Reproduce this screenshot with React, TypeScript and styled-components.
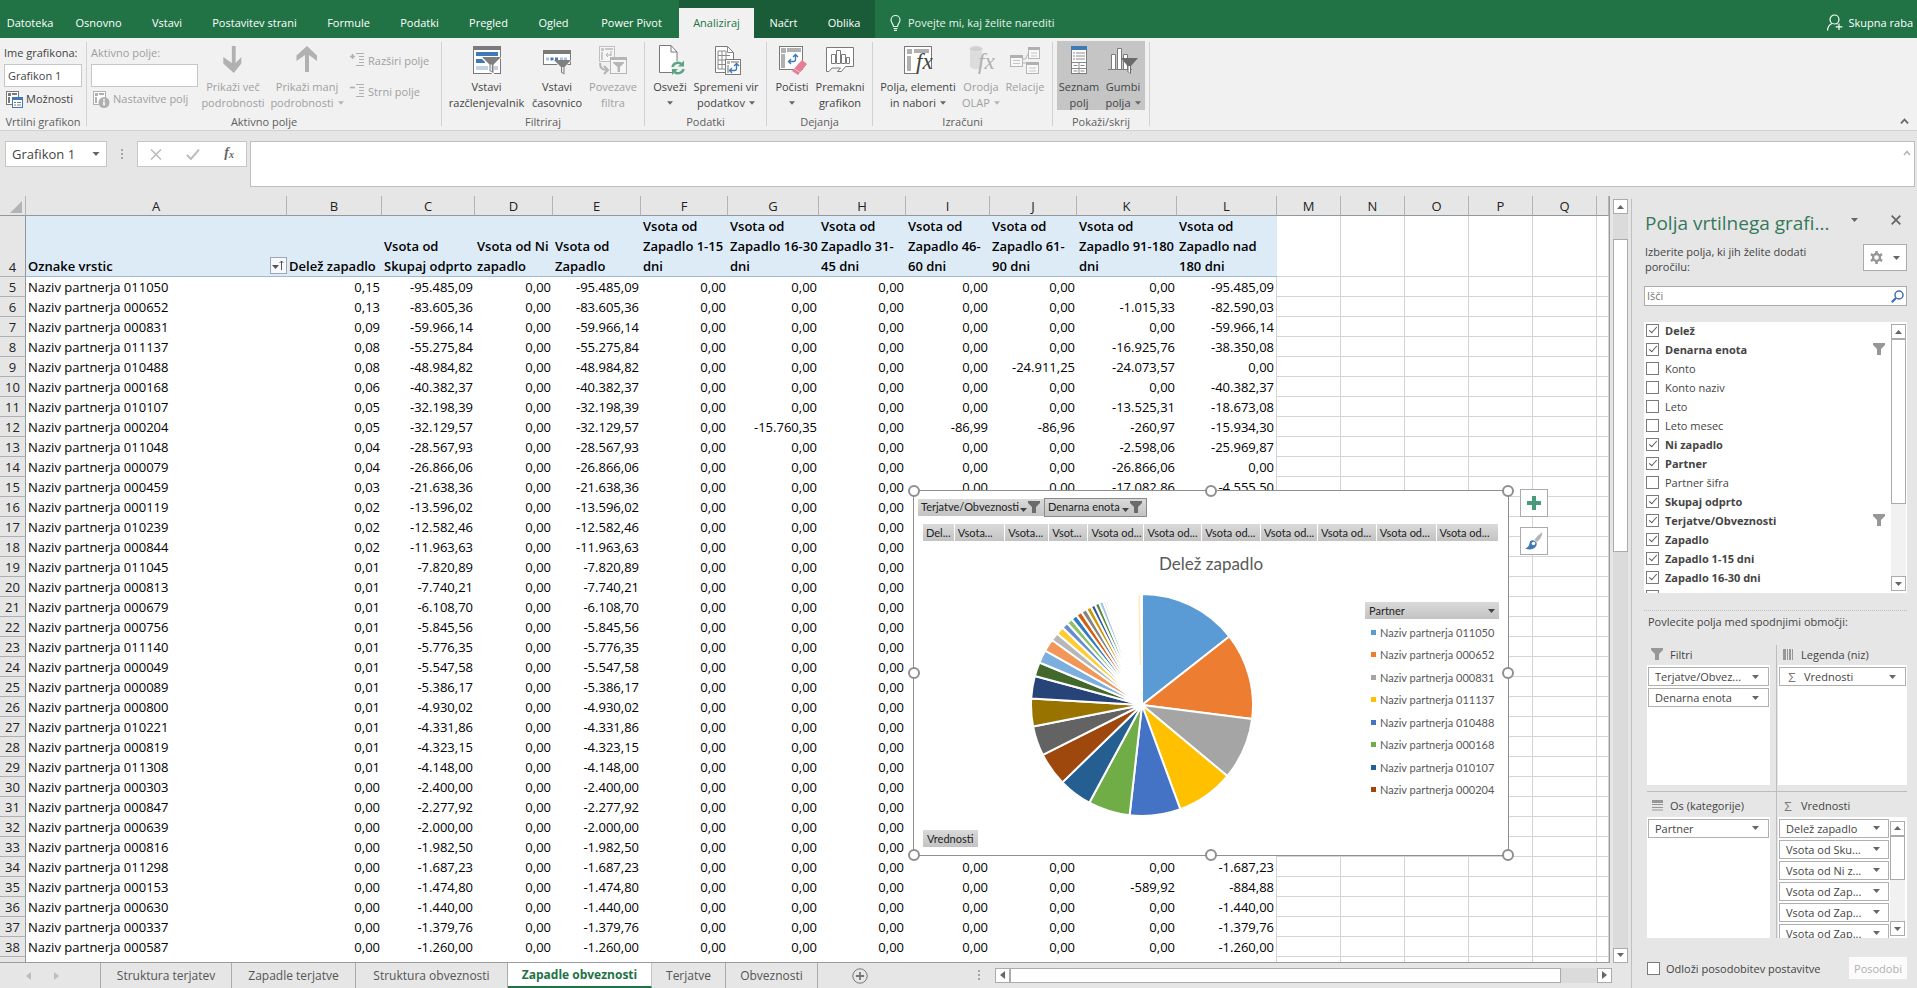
import React from "react";
import styled, { createGlobalStyle, css } from "styled-components";

const UI = `"Open Sans", "Noto Sans", sans-serif`;
const CHART = `Lato, "Open Sans", sans-serif`;

const GlobalStyle = createGlobalStyle`
  *, *::before, *::after { box-sizing: border-box; }
  body { margin: 0; font-family: ${UI}; font-size: 11px; color: #444; background: #e6e6e6; }
  button, input { font: inherit; color: inherit; margin: 0; padding: 0; border: 0; background: none; border-radius: 0; outline: 0; }
  svg { display: block; flex: none; }
`;

/* ---------- data ---------- */

const COLUMNS: [string, number, string][] = [
  ["A", 261, "Oznake vrstic"],
  ["B", 95, "Delež zapadlo"],
  ["C", 93, "Vsota od\nSkupaj odprto"],
  ["D", 78, "Vsota od Ni\nzapadlo"],
  ["E", 88, "Vsota od\nZapadlo"],
  ["F", 87, "Vsota od\nZapadlo 1-15\ndni"],
  ["G", 91, "Vsota od\nZapadlo 16-30\ndni"],
  ["H", 87, "Vsota od\nZapadlo 31-\n45 dni"],
  ["I", 84, "Vsota od\nZapadlo 46-\n60 dni"],
  ["J", 87, "Vsota od\nZapadlo 61-\n90 dni"],
  ["K", 100, "Vsota od\nZapadlo 91-180\ndni"],
  ["L", 100, "Vsota od\nZapadlo nad\n180 dni"],
];
const EMPTY_COLUMNS = ["M", "N", "O", "P", "Q"];

const Z = "0,00";
type Row = { id: string; share: string; total: string; g?: string; late?: string[] };
const ROWS: Row[] = [
  { id: "011050", share: "0,15", total: "-95.485,09", late: [Z, Z, Z, "-95.485,09"] },
  { id: "000652", share: "0,13", total: "-83.605,36", late: [Z, Z, "-1.015,33", "-82.590,03"] },
  { id: "000831", share: "0,09", total: "-59.966,14", late: [Z, Z, Z, "-59.966,14"] },
  { id: "011137", share: "0,08", total: "-55.275,84", late: [Z, Z, "-16.925,76", "-38.350,08"] },
  { id: "010488", share: "0,08", total: "-48.984,82", late: [Z, "-24.911,25", "-24.073,57", Z] },
  { id: "000168", share: "0,06", total: "-40.382,37", late: [Z, Z, Z, "-40.382,37"] },
  { id: "010107", share: "0,05", total: "-32.198,39", late: [Z, Z, "-13.525,31", "-18.673,08"] },
  { id: "000204", share: "0,05", total: "-32.129,57", g: "-15.760,35", late: ["-86,99", "-86,96", "-260,97", "-15.934,30"] },
  { id: "011048", share: "0,04", total: "-28.567,93", late: [Z, Z, "-2.598,06", "-25.969,87"] },
  { id: "000079", share: "0,04", total: "-26.866,06", late: [Z, Z, "-26.866,06", Z] },
  { id: "000459", share: "0,03", total: "-21.638,36", late: [Z, Z, "-17.082,86", "-4.555,50"] },
  { id: "000119", share: "0,02", total: "-13.596,02" },
  { id: "010239", share: "0,02", total: "-12.582,46" },
  { id: "000844", share: "0,02", total: "-11.963,63" },
  { id: "011045", share: "0,01", total: "-7.820,89" },
  { id: "000813", share: "0,01", total: "-7.740,21" },
  { id: "000679", share: "0,01", total: "-6.108,70" },
  { id: "000756", share: "0,01", total: "-5.845,56" },
  { id: "011140", share: "0,01", total: "-5.776,35" },
  { id: "000049", share: "0,01", total: "-5.547,58" },
  { id: "000089", share: "0,01", total: "-5.386,17" },
  { id: "000800", share: "0,01", total: "-4.930,02" },
  { id: "010221", share: "0,01", total: "-4.331,86" },
  { id: "000819", share: "0,01", total: "-4.323,15" },
  { id: "011308", share: "0,01", total: "-4.148,00" },
  { id: "000303", share: Z, total: "-2.400,00" },
  { id: "000847", share: Z, total: "-2.277,92" },
  { id: "000639", share: Z, total: "-2.000,00" },
  { id: "000816", share: Z, total: "-1.982,50" },
  { id: "011298", share: Z, total: "-1.687,23", late: [Z, Z, Z, "-1.687,23"] },
  { id: "000153", share: Z, total: "-1.474,80", late: [Z, Z, "-589,92", "-884,88"] },
  { id: "000630", share: Z, total: "-1.440,00", late: [Z, Z, Z, "-1.440,00"] },
  { id: "000337", share: Z, total: "-1.379,76", late: [Z, Z, Z, "-1.379,76"] },
  { id: "000587", share: Z, total: "-1.260,00", late: [Z, Z, Z, "-1.260,00"] },
];

const PALETTE = [
  "#5b9bd5", "#ed7d31", "#a5a5a5", "#ffc000", "#4472c4", "#70ad47",
  "#255e91", "#9e480e", "#636363", "#997300", "#264478", "#43682b",
  "#7cafdd", "#f1975a", "#b7b7b7", "#ffcd33", "#698ed0", "#8cc168",
  "#327dc2", "#d26012", "#848484", "#cc9a00", "#335aa1", "#5a8a39",
  "#9dc3e6", "#f4b183", "#c9c9c9", "#ffd966", "#8faadc", "#a9d18e",
];
const GRAND_TOTAL = 663000;

/* ---------- shared bits ---------- */

const Caret = ({ c = "#666", up = false, s = 7 }: { c?: string; up?: boolean; s?: number }) => (
  <svg width={s} height="4" viewBox="0 0 7 4"><path d={up ? "M0 4L3.5 0L7 4z" : "M0 0h7L3.5 4z"} fill={c} /></svg>
);
const Side = ({ left = false, c = "#666" }: { left?: boolean; c?: string }) => (
  <svg width="5" height="8" viewBox="0 0 5 8"><path d={left ? "M5 0v8L0 4z" : "M0 0v8l5-4z"} fill={c} /></svg>
);
const FunnelIcon = ({ c = "#979797" }: { c?: string }) => (
  <svg width="12" height="12" viewBox="0 0 12 12"><path d="M0 0h12v2L8 6v6H4V6L0 2z" fill={c} /></svg>
);

/* ---------- title tabs ---------- */

const TabBar = styled.header`display: flex; height: 38px; background: #217346; color: #fff;`;
const TabList = styled.nav`display: flex;`;
const Tab = styled.button<{ $w: number; $kind?: "context" | "active" }>`
  width: ${p => p.$w}px;
  padding-top: 7px;
  white-space: nowrap;
  line-height: 16px;
  ${p => p.$kind === "context" && css`background: #1b5c38;`}
  ${p => p.$kind === "active" && css`background: #f1f1f1; color: #217346; border-top: 8px solid #1b5c38; padding-top: 0;`}
`;
const TellMe = styled.button`display: flex; align-items: center; gap: 7px; margin-left: 15px; padding-top: 7px; color: #e3f3e9;`;
const Share = styled.button`display: flex; align-items: center; gap: 6px; margin-left: auto; padding: 7px 4px 0 0;`;

const TABS: [string, number, ("context" | "active")?][] = [
  ["Datoteka", 60], ["Osnovno", 77], ["Vstavi", 60], ["Postavitev strani", 115], ["Formule", 73], ["Podatki", 69],
  ["Pregled", 69], ["Ogled", 61], ["Power Pivot", 95], ["Analiziraj", 75, "active"], ["Načrt", 59, "context"], ["Oblika", 62, "context"],
];

/* ---------- ribbon ---------- */

const Ribbon = styled.section`display: flex; height: 93px; background: #f1f1f1; border-bottom: 1px solid #d2d2d2;`;
const Group = styled.div<{ $w: number }>`width: ${p => p.$w}px; display: flex; flex-direction: column;`;
const GroupBody = styled.div<{ $pad: number }>`display: flex; padding-left: ${p => p.$pad}px; height: 72px;`;
const GroupLabel = styled.div`margin-top: auto; line-height: 16px; text-align: center; color: #5e5e5e; white-space: nowrap;`;
const Divider = styled.div`width: 1px; margin: 4px 0; background: #d2d2d2;`;
const BigButton = styled.button<{ $w: number; $off?: boolean; $on?: boolean }>`
  width: ${p => p.$w}px; margin-top: 3px; padding-top: 4px; height: 69px;
  display: flex; flex-direction: column; align-items: center; gap: 4px;
  line-height: 16px; color: ${p => (p.$off ? "#a0a0a0" : "#444")};
  background: ${p => (p.$on ? "#c5c5c5" : "transparent")};
`;
const BigText = styled.span`display: flex; flex-direction: column; align-items: center; white-space: nowrap;`;
const BigLine = styled.span`display: flex; align-items: center; gap: 4px; min-height: 16px;`;
const Stack = styled.div<{ $w: number }>`display: flex; flex-direction: column; width: ${p => p.$w}px; padding-top: 7px; line-height: 16px; white-space: nowrap;`;
const StackLabel = styled.label<{ $off?: boolean }>`color: ${p => (p.$off ? "#a0a0a0" : "#444")};`;
const StackInput = styled.input<{ $w: number }>`width: ${p => p.$w}px; height: 23px; margin-top: 3px; padding: 0 3px; background: #fff; border: 1px solid #c6c6c6;`;
const SmallButton = styled.button<{ $off?: boolean }>`
  display: flex; align-items: center; gap: 3px; height: 18px; margin: 3px 0 0 2px; white-space: nowrap; color: ${p => (p.$off ? "#a0a0a0" : "#444")};
`;
const Expand = styled.div`display: flex; flex-direction: column; gap: 10px; padding: 10px 0 0 2px;`;
const Collapse = styled.button`margin: auto 8px 6px auto;`;

type BtnProps = { w: number; lines: string[]; icon: React.ReactNode; off?: boolean; on?: boolean; caret?: boolean };
const Big = ({ w, lines, icon, off, on, caret }: BtnProps) => (
  <BigButton type="button" $w={w} $off={off} $on={on} disabled={off}>
    {icon}
    <BigText>
      {lines.map((l, i) => (
        <BigLine key={i}>{l}{caret && i === lines.length - 1 && <Caret c={off ? "#b5b5b5" : "#666"} s={6} />}</BigLine>
      ))}
    </BigText>
  </BigButton>
);
const Ico = ({ children }: { children: React.ReactNode }) => <svg width="30" height="30" viewBox="0 0 30 30" fill="none">{children}</svg>;

const SwapArrow = ({ x, y, c = "#3b78b5" }: { x: number; y: number; c?: string }) => (
  <g transform={`translate(${x} ${y})`} stroke={c} strokeWidth="1.3"><path d="M1 7.500h4.500q2 0 2-2V1M5 3l2.500-2.500L10 3M3 5L.5 7.500L3 10" /></g>
);
const DownArrow = <Ico><path d="M13 1h4v17l6-6v6.500L15 28l-11-9.500V12l9 6z" fill="#b1b1b1" transform="translate(1.500 0) scale(.95 1)" /></Ico>;
const UpArrow = <Ico><path d="M13 27h4V10l8 6V10.500L15 1L4.500 10.500V16l8.500-6z" fill="#b1b1b1" /></Ico>;
const Slicer = (
  <Ico>
    <rect x="1.500" y="1.500" width="27" height="27" fill="#fff" stroke="#7a7a7a" /><path d="M1 1h28v4H1z" fill="#7a7a7a" />
    <path d="M4 7h22v4H4zM4 14h9v4H4z" fill="#3f7ab6" /><path d="M4 21h22v4H4z" fill="#c0d1e6" />
    <path d="M8 12h22l-8 8v10l-6-4v-6z" fill="#fff" /><path d="M10 12h19l-7.500 7.500V28L17.500 26v-6.500z" fill="#7f7f7f" /><path d="M18.500 19.500v6l1.500 1v-7z" fill="#e8e8e8" />
  </Ico>
);
const Timeline = (
  <Ico>
    <rect x="1.500" y="5.500" width="27" height="14" fill="#fff" stroke="#7a7a7a" /><path d="M1 5h28v4H1z" fill="#7a7a7a" />
    <path d="M4 12.500h3v3H4zM18 12.500h3v3h-3zM22 12.500h3v3h-3z" fill="#a8c1dc" /><path d="M8.500 12.500h3v3h-3zM13 12.500h3v3h-3z" fill="#3f7ab6" />
    <path d="M10 15h20l-7 7v8h-5v-8z" fill="#f1f1f1" /><path d="M12 15h17l-6.500 7v7.500l-3.500-2V22z" fill="#7f7f7f" /><path d="M20 22v5l1.500 1v-6z" fill="#e8e8e8" />
  </Ico>
);
const Connections = (
  <Ico>
    <rect x="1.500" y="1.500" width="15" height="15" fill="#f5f5f5" stroke="#c0c0c0" /><path d="M3 3h3v3H3zM7 3h8v2H7zM3 7h2v8H3z" fill="#c8c8c8" />
    <path d="M8 10h5M10 8l-2 2l2 2M13 6v5" stroke="#b0b0b0" /><rect x="12.500" y="12.500" width="16" height="16" fill="#f5f5f5" stroke="#b5b5b5" />
    <path d="M12 12h17v3H12zM15 17h11v1l-4 4v5h-2.500v-5L15 18z" fill="#b5b5b5" /><path d="M2 18q0 7 7 7M6 21l4 4l-4 4" stroke="#b5b5b5" strokeWidth="2" />
  </Ico>
);
const Refresh = (
  <Ico>
    <path d="M4.500 .5h11.500l6 6.500v20.500H4.500z" fill="#fff" stroke="#7a7a7a" /><path d="M16 .5v6.500h6" stroke="#7a7a7a" />
    <circle cx="23" cy="23" r="7" fill="#f1f1f1" />
    <path d="M17.500 22a5.500 5 0 0 1 9-3M28.500 24a5.500 5 0 0 1-9 3" stroke="#5aa483" strokeWidth="2.400" /><path d="M29 15.500v6h-6zM17 30v-6h6z" fill="#5aa483" />
  </Ico>
);
const Source = (
  <Ico>
    <path d="M4.500 1.500h12l6 6v20h-18z" fill="#fff" stroke="#7a7a7a" /><path d="M16.500 1.500v6h6M7 6h8M7 10.500h12M7 15h8M7 19.500h7M7 24h7M7 6v18M11 6v18M15 6v9" stroke="#8a8a8a" />
    <rect x="14.500" y="14.500" width="15" height="15" fill="#fff" stroke="#7a7a7a" /><path d="M16 16h3v3h-3zM20 16h8v2h-8zM16 20h2v8h-2z" fill="#b5b5b5" /><SwapArrow x={18} y={18} />
  </Ico>
);
const Clear = (
  <Ico>
    <rect x="2.500" y="1.500" width="23" height="23" fill="#fff" stroke="#7a7a7a" /><path d="M4 3h5v5H4zM10 3h14v4H10zM4 9h4v14H4z" fill="#b0b0b0" /><SwapArrow x={11} y={9} />
    <path d="M25 15l5 4l-9 11l-6-4z" fill="#e57d94" /><path d="M17 23.500l6 4" stroke="#f4c3cd" />
  </Ico>
);
const MoveChart = (
  <Ico>
    <path d="M1.500 2.500h27v19h-8l-4 5h-4l3-3.500H7l-3 3.500h-2.500z" fill="#fff" stroke="#7a7a7a" /><path d="M6.500 9.500h4v9h-4zM11.500 5.500h4v13h-4zM16.500 9.500h4v9h-4zM21.500 12.500h3v6h-3z" stroke="#7a7a7a" />
  </Ico>
);
const Fields = (
  <Ico>
    <rect x="1.500" y="1.500" width="27" height="27" fill="#fff" stroke="#7a7a7a" />
    <path d="M4 4h5v5H4zM11 4h15v4H11zM4 11h4v15H4z" fill="#b0b0b0" /><path d="M16 24h14v6H14z" fill="#f1f1f1" />
    <text x="13" y="24" fontFamily="Liberation Serif, serif" fontStyle="italic" fontSize="23" fill="#444">fx</text>
  </Ico>
);
const Olap = (
  <Ico>
    <path d="M4 4v18q5 4 12 1V4z" fill="#dcdcdc" /><ellipse cx="10" cy="4" rx="6.500" ry="3" fill="#d0d0d0" stroke="#e6e6e6" />
    <text x="12" y="24" fontFamily="Liberation Serif, serif" fontStyle="italic" fontSize="23" fill="#b0b0b0">fx</text>
  </Ico>
);
const Relations = (
  <Ico>
    <g stroke="#b5b5b5" fill="#f8f8f8"><rect x=".5" y="10.500" width="12" height="11" /><rect x="18.500" y="2.500" width="11" height="11" /><rect x="16.500" y="17.500" width="12" height="11" /><path d="M12.500 14h3l3-6M12.500 18h4" fill="none" /></g>
    <path d="M0 10h13v3H0zM18 2h12v3H18zM16 17h13v3H16z" fill="#b0b0b0" /><path d="M3 15.500h7M3 18.500h7M21 8h6M21 11h6M19 23h7M19 26h7" stroke="#c5c5c5" />
  </Ico>
);
const FieldListIcon = (
  <Ico>
    <rect x="7.500" y="1.500" width="15" height="27" fill="#fff" stroke="#7a7a7a" /><path d="M7 1h16v4H7z" fill="#3f7ab6" />
    <path d="M9 8h2M12 8h9M9 11h2M12 11h9M9 14h2M12 14h9" stroke="#8a8a8a" /><path d="M8 17.500h14M15 17v11M9.500 20.500h4M16.500 20.500h4M8 23.500h14M9.500 26h4M16.500 26h4" stroke="#8a8a8a" />
  </Ico>
);
const FieldButtonsIcon = (
  <Ico>
    <path d="M0 24.500h24" stroke="#7a7a7a" /><path d="M3.500 9.500h4v15h-4zM9.500 3.500h4v21h-4zM15.500 9.500h4v15h-4z" fill="#fff" stroke="#7a7a7a" />
    <path d="M13 13h17l-7 8v8l-3.500-2v-6z" fill="#6b6b6b" /><path d="M20.500 21v6l1.500 1v-7z" fill="#fff" />
  </Ico>
);
const OptionsIcon = ({ c, accent, info }: { c: string; accent: string; info?: boolean }) => (
  <svg width="17" height="17" viewBox="0 0 17 17" fill="none">
    <rect x=".5" y=".5" width="12" height="13" fill="#fff" stroke={c} /><path d="M2 2h3v3H2zM6 2h5v2H6zM2 6h2v6H2z" fill={c} />
    {info ? <><circle cx="11" cy="11.500" r="5.500" fill={c} /><path d="M11 8v1.500M11 10.500v4" stroke="#fff" strokeWidth="1.600" /></>
      : <><rect x="6.500" y="6.500" width="10" height="10" fill="#fff" stroke={accent} /><path d="M6 6h11v3H6z" fill={accent} /><path d="M8 11.500h2M11 11.500h4M8 14h2M11 14h4" stroke={c} /></>}
  </svg>
);
const OutlineIcon = ({ plus }: { plus?: boolean }) => (
  <svg width="15" height="14" viewBox="0 0 15 14" fill="none" stroke="#b0b0b0"><path d="M0 3.500h5" strokeWidth="1.600" />{plus && <path d="M2.500 1v5" strokeWidth="1.600" />}<path d="M6 .5h8M9 3.500h5M9 6.500h5M9 9.500h5M6 12.500h8" /></svg>
);

/* ---------- formula bar ---------- */

const FormulaBar = styled.section`display: flex; align-items: flex-start; height: 65px; padding: 10px 2px 0 5px; background: #e6e6e6;`;
const NameBox = styled.div`display: flex; align-items: center; width: 102px; height: 26px; padding-right: 6px; background: #fff; border: 1px solid #c6c6c6; font-size: 13px;`;
const NameInput = styled.input`flex: 1; min-width: 0; padding-left: 6px;`;
const Dots = styled.div`display: flex; flex-direction: column; gap: 2px; padding: 8px 14px 0; i { width: 2px; height: 2px; background: #a5a5a5; }`;
const FxBox = styled.div`display: flex; align-items: center; justify-content: space-between; width: 110px; height: 26px; padding: 0 12px; background: #fff; border: 1px solid #c6c6c6;`;
const FxButton = styled.button`font: italic bold 14px "Liberation Serif", serif; color: #666; line-height: 16px; sub { font-size: 10px; vertical-align: -1px; }`;
const FormulaField = styled.div`display: flex; align-items: flex-start; flex: 1; height: 46px; margin-left: 3px; padding-right: 3px; background: #fff; border: 1px solid #bebebe;`;
const FormulaText = styled.textarea`flex: 1; height: 42px; border: 0; outline: 0; resize: none; background: none; font: inherit;`;
const FormulaUp = styled.button`margin-top: 8px;`;

/* ---------- sheet ---------- */

const Shell = styled.div`display: flex; flex-direction: column; height: 100vh; min-height: 700px; overflow: hidden;`;
const Work = styled.main`display: flex; flex: 1; min-height: 0;`;
const Left = styled.div`display: flex; flex-direction: column; flex: 1; min-width: 0;`;
const SheetRow = styled.div`display: flex; flex: 1; min-height: 0;`;
const GridArea = styled.div`position: relative; flex: 1; min-width: 0; overflow: hidden; border-right: 1px solid #9b9b9b; border-bottom: 1px solid #9b9b9b; background: #e6e6e6;`;
const Grid = styled.table`table-layout: fixed; width: 100%; border-collapse: separate; border-spacing: 0; font-size: 13px; line-height: 18px; color: #000; background: #fff;`;
const ColHead = styled.th`height: 20px; padding: 0; font-weight: 400; color: #222; background: #e6e6e6; border-right: 1px solid #b4b4b4; border-bottom: 1px solid #8f979f;`;
const Corner = styled(ColHead)`padding: 0 3px 2px 0; svg { margin: 4px 0 0 10px; }`;
const RowHead = styled.th<{ $bottom?: boolean }>`
  height: 20px; padding: 0; font-weight: 400; color: #222; background: #e6e6e6;
  border-right: 1px solid #8f979f; border-bottom: 1px solid #b0b0b0; vertical-align: ${p => (p.$bottom ? "bottom" : "middle")};
`;
const HeadCell = styled.th`
  height: 60px; padding: 0 0 0 2px; text-align: left; vertical-align: bottom; white-space: pre; line-height: 20px; font-weight: 600;
  background: #ddebf7; border-bottom: 1px solid #9fb9d1;
`;
const HeadInner = styled.div`display: flex; align-items: flex-end; justify-content: space-between; height: 20px;`;
const SortButton = styled.button`display: flex; align-items: center; justify-content: center; width: 17px; height: 17px; margin-bottom: 2px; background: #f7f9fc; border: 1px solid #9aa7b8;`;
const NameCell = styled.td`padding: 0 0 0 2px; white-space: nowrap;`;
const NumCell = styled.td<{ $edge?: boolean }>`padding: 0 2px 0 0; text-align: right; white-space: nowrap; ${p => p.$edge && css`border-right: 1px solid #d4d4d4;`}`;
const EmptyCell = styled.td`padding: 0; border-right: 1px solid #d4d4d4; border-bottom: 1px solid #d4d4d4;`;

const VBar = styled.div`display: flex; flex-direction: column; width: 15px; margin: 3px 3px 0; background: #dbdbdb;`;
const ScrollButton = styled.button`display: flex; align-items: center; justify-content: center; flex: none; width: 15px; height: 15px; background: #fff; border: 1px solid #ababab;`;
const VGap = styled.div<{ $n: number }>`flex: ${p => p.$n} 1 0;`;
const VThumb = styled.div<{ $n: number }>`flex: ${p => p.$n} 1 0; background: #fff; border: 1px solid #ababab;`;

const SheetTabs = styled.footer`display: flex; align-items: stretch; height: 25px; font-size: 12px; color: #555; background: #e6e6e6;`;
const SheetNav = styled.div`display: flex; align-items: center; gap: 23px; width: 101px; padding-left: 26px; border-right: 1px solid #ababab;`;
const SheetTab = styled.button<{ $w: number; $active?: boolean }>`
  width: ${p => p.$w}px; white-space: nowrap; border-right: 1px solid #ababab; padding-bottom: 1px;
  ${p => p.$active && css`background: #fff; color: #217346; font-weight: 700; border-right-color: #c6c6c6; border-bottom: 2px solid #217346; margin-top: -1px; padding-bottom: 0;`}
`;
const AddSheet = styled.button`margin-left: 34px;`;
const HBar = styled.div`display: flex; align-items: center; flex: none; margin: 0 19px 0 auto; width: 634px; padding-bottom: 1px;`;
const HDots = styled(Dots)`padding: 0 15px 0 0;`;
const HTrack = styled.div`display: flex; flex: 1; background: #dbdbdb;`;
const HThumb = styled.div`flex: 1; margin-right: 36px; background: #fff; border: 1px solid #ababab;`;

/* ---------- chart ---------- */

const Chart = styled.section`
  position: absolute; left: 913px; top: 294px; width: 596px; height: 366px; background: #fff; border: 1px solid #8f8f8f;
  font-family: ${CHART}; color: #222; padding: 6px 9px 8px 4px; display: flex; flex-direction: column;
`;
const Handle = styled.i<{ $x: number; $y: number }>`
  position: absolute; left: calc(${p => p.$x}% - 6px); top: calc(${p => p.$y}% - 6px); width: 12px; height: 12px; border: 2px solid #8f8f8f; border-radius: 50%; background: #fff;
`;
const chip = css`display: flex; align-items: center; height: 17px; line-height: 16px; background: linear-gradient(#dadada, #c3c3c3); white-space: nowrap;`;
const FilterRow = styled.div`display: flex; align-items: center; height: 20px;`;
const ChartFilter = styled.button<{ $w: number; $focus?: boolean }>`
  ${chip} width: ${p => p.$w}px; padding: 0 4px 0 3px; gap: 1px;
  span { flex: 1; text-align: left; }
  svg:first-of-type { margin-top: 5px; }
  ${p => p.$focus && css`height: 19px; border: 1px solid #8a8a8a;`}
`;
const ValueRow = styled.div`display: flex; gap: 1px; margin: 7px 1px 0 5px;`;
const ValueChip = styled.button<{ $w: number }>`${chip} flex: ${p => p.$w} 1 0; min-width: 0; padding-left: 3px;`;
const ChartTitle = styled.h2`margin: 10px 0 0 5px; text-align: center; font-size: 17px; line-height: 26px; font-weight: 400; color: #595959;`;
const ChartBody = styled.div`display: flex; justify-content: space-between; flex: 1; padding: 16px 0 0 112px;`;
const Legend = styled.div`width: 134px; margin-top: 9px; color: #595959;`;
const LegendButton = styled.button`${chip} width: 100%; justify-content: space-between; padding: 0 4px; color: #222;`;
const LegendList = styled.ul`list-style: none; margin: 2px 0 0; padding: 0; height: 180px; display: grid; grid-template-rows: repeat(8, 1fr);`;
const LegendItem = styled.li`display: flex; align-items: center; gap: 4px; padding-left: 6px; white-space: nowrap;`;
const Swatch = styled.i<{ $c: string }>`width: 5px; height: 5px; background: ${p => p.$c};`;
const ValuesButton = styled.button`${chip} align-self: flex-start; margin-left: 5px; padding: 0 4px;`;
const ChartTool = styled.button<{ $top: number }>`
  position: absolute; left: 1520px; top: ${p => p.$top}px; width: 28px; height: 28px; display: flex; align-items: center; justify-content: center; background: #fff; border: 1px solid #ababab;
`;

const parse = (s: string) => Math.abs(parseFloat(s.replace(/\./g, "").replace(",", ".")));
const Pie = () => {
  const R = 111;
  let acc = 0;
  const point = (v: number) => {
    const a = (v / GRAND_TOTAL) * Math.PI * 2;
    return `${(R * Math.sin(a)).toFixed(2)} ${(-R * Math.cos(a)).toFixed(2)}`;
  };
  return (
    <svg width="224" height="224" viewBox="-112 -112 224 224" role="img" aria-label="Delež zapadlo">
      {ROWS.map((r, i) => {
        const from = acc;
        acc += parse(r.total);
        return <path key={r.id} d={`M0 0L${point(from)}A${R} ${R} 0 0 1 ${point(acc)}z`} fill={PALETTE[i % PALETTE.length]} stroke="#fff" strokeWidth="2" strokeLinejoin="round" />;
      })}
      <path d="M-3 -110L-1.500 -40" stroke="#fbeeb8" strokeWidth="1.500" />
    </svg>
  );
};

/* ---------- field pane ---------- */

const Pane = styled.aside`display: flex; flex-direction: column; width: 286px; margin-top: 3px; padding: 10px 10px 8px 12px; border-left: 1px solid #c0c0c0; background: #e6e6e6;`;
const PaneHead = styled.div`display: flex; align-items: center; height: 28px; padding: 0 6px 0 1px;`;
const PaneTitle = styled.h1`flex: 1; margin: 0; font-size: 19px; line-height: 28px; font-weight: 400; color: #35795a; white-space: nowrap;`;
const PaneTools = styled.div`display: flex; align-items: center; gap: 32px; padding-bottom: 6px;`;
const PaneIntro = styled.div`display: flex; justify-content: space-between; align-items: flex-start; margin-top: 7px; padding-left: 1px; line-height: 15px; white-space: nowrap;`;
const GearButton = styled.button`display: flex; align-items: center; justify-content: center; gap: 10px; width: 44px; height: 27px; background: #fff; border: 1px solid #ababab;`;
const Search = styled.div`display: flex; align-items: center; height: 20px; margin-top: 12px; padding: 0 2px; background: #fff; border: 1px solid #ababab;`;
const SearchInput = styled.input`flex: 1; min-width: 0; height: 18px; padding-bottom: 2px; &::placeholder { color: #777; opacity: 1; }`;
const FieldBox = styled.div`display: flex; flex: 271 1 0; min-height: 0; margin-top: 16px; background: #fff; overflow: hidden;`;
const FieldList = styled.ul`flex: 1; list-style: none; margin: 0; padding: 0 5px 0 2px; height: 100%; overflow: hidden;`;
const FieldItem = styled.li<{ $b?: boolean }>`display: flex; align-items: center; justify-content: space-between; height: 19px; padding-bottom: 3px; font-weight: ${p => (p.$b ? 700 : 400)};`;
const CheckLabel = styled.label`display: flex; align-items: center; gap: 6px; white-space: nowrap;`;
const Check = styled.input`
  appearance: none; flex: none; position: relative; width: 13px; height: 13px; background: #fff; border: 1px solid #7a7a7a;
  &:checked::after { content: ""; position: absolute; left: 4px; top: 0; width: 4px; height: 8px; border: solid #555; border-width: 0 1px 1px 0; transform: rotate(42deg); }
`;
const MiniBar = styled.div`display: flex; flex-direction: column; width: 15px; margin: 2px 1px; background: #f1f1f1;`;
const Drag = styled.div`margin-top: 17px; padding: 3px 0 0 4px; line-height: 16px; border-top: 1px dotted #bdbdbd;`;
const Areas = styled.div`display: grid; grid-template-columns: 130px 1fr; grid-template-rows: 1fr 1fr; flex: 292 1 0; min-height: 0; margin: 15px 0 0 3px;`;
const Area = styled.section<{ $right?: boolean; $bottom?: boolean }>`
  display: flex; flex-direction: column; min-height: 0; min-width: 0;
  padding: ${p => (p.$bottom ? "5px" : "0")} ${p => (p.$right ? "0" : "6px")} ${p => (p.$bottom ? "0" : "6px")} ${p => (p.$right ? "1px" : "0")};
  ${p => !p.$right && css`border-right: 1px solid #bdbdbd;`}
  ${p => !p.$bottom && css`border-bottom: 1px solid #bdbdbd;`}
`;
const AreaHead = styled.h3`display: flex; align-items: center; gap: 7px; height: 20px; margin: 0; padding: 0 0 2px 4px; font-size: 11px; font-weight: 400;`;
const IconSlot = styled.span`display: flex; justify-content: center; width: 12px; font-size: 13px; line-height: 12px; color: #777;`;
const DropZone = styled.div`display: flex; flex: 1; min-height: 0; padding: 2px 1px 0; background: #fff; overflow: hidden;`;
const Chips = styled.div`display: flex; flex-direction: column; gap: 2px; flex: 1; min-width: 0;`;
const Chip = styled.button<{ $pad: number }>`
  display: flex; align-items: center; flex: none; height: 19px; padding: 0 ${p => p.$pad}px 0 6px; gap: 6px; background: #fff; border: 1px solid #b0b0b0; white-space: nowrap;
  svg { margin-left: auto; }
`;
const PaneFoot = styled.div`display: flex; align-items: center; justify-content: space-between; margin: 19px 0 1px 3px;`;
const UpdateButton = styled.button`width: 58px; height: 22px; background: #fbfbfb; color: #b0b0b0;`;

const FIELDS: [string, boolean, boolean?][] = [
  ["Delež", true], ["Denarna enota", true, true], ["Konto", false], ["Konto naziv", false], ["Leto", false], ["Leto mesec", false],
  ["Ni zapadlo", true], ["Partner", true], ["Partner šifra", false], ["Skupaj odprto", true], ["Terjatve/Obveznosti", true, true],
  ["Zapadlo", true], ["Zapadlo 1-15 dni", true], ["Zapadlo 16-30 dni", true], ["Zapadlo 31-45 dni", true],
];
const VALUE_CHIPS: [string, number][] = [
  ["Del...", 30], ["Vsota...", 50], ["Vsota...", 43], ["Vsot...", 38], ["Vsota od...", 56], ["Vsota od...", 58],
  ["Vsota od...", 59], ["Vsota od...", 57], ["Vsota od...", 59], ["Vsota od...", 60], ["Vsota od...", 63],
];
const VALUES = ["Delež zapadlo", "Vsota od Sku...", "Vsota od Ni z...", "Vsota od Zap...", "Vsota od Zap...", "Vsota od Zap..."];

const Bars = ({ v }: { v?: boolean }) => (
  <svg width="11" height="11" viewBox="0 0 11 11" fill="#979797">
    {v ? <path d="M0 0h3v11H0zM4 0h1v11H4zM6 0h2v11H6zM9 0h1v11H9z" /> : <path d="M0 0h11v3H0zM0 4h11v1H0zM0 7h11v1H0zM0 9.500h11v1H0z" />}
  </svg>
);

export default function App() {
  return (
    <Shell>
      <GlobalStyle />
      <TabBar>
        <TabList>
          {TABS.map(([t, w, k]) => <Tab key={t} type="button" $w={w} $kind={k}>{t}</Tab>)}
        </TabList>
        <TellMe type="button">
          <svg width="11" height="16" viewBox="0 0 11 16" fill="none" stroke="#e3f3e9" strokeWidth="1.200"><path d="M3.500 11.500C3.500 9 1 8 1 5a4.500 4.500 0 0 1 9 0c0 3-2.500 4-2.500 6.500zM3.500 13.500h4M4 15.400h3" /></svg>
          Povejte mi, kaj želite narediti
        </TellMe>
        <Share type="button">
          <svg width="16" height="17" viewBox="0 0 16 17" fill="none" stroke="#fff" strokeWidth="1.200"><circle cx="7.500" cy="5.500" r="4.500" /><path d="M.600 16.500q0-5 4.400-7M9.500 9.500l1 .8M12 9.500v6.500M8.700 12.800h6.600" /></svg>
          Skupna raba
        </Share>
      </TabBar>

      <Ribbon>
        <Group $w={86}>
          <GroupBody $pad={4}>
            <Stack $w={80}>
              <StackLabel htmlFor="chart-name">Ime grafikona:</StackLabel>
              <StackInput id="chart-name" $w={78} defaultValue="Grafikon 1" />
              <SmallButton type="button"><OptionsIcon c="#7a7a7a" accent="#3f7ab6" />Možnosti</SmallButton>
            </Stack>
          </GroupBody>
          <GroupLabel>Vrtilni grafikon</GroupLabel>
        </Group>
        <Divider />
        <Group $w={354}>
          <GroupBody $pad={4}>
            <Stack $w={107}>
              <StackLabel $off htmlFor="active-field">Aktivno polje:</StackLabel>
              <StackInput id="active-field" $w={107} defaultValue="" />
              <SmallButton type="button" $off><OptionsIcon c="#b0b0b0" accent="#b0b0b0" info />Nastavitve polj</SmallButton>
            </Stack>
            <Big w={70} off icon={DownArrow} lines={["Prikaži več", "podrobnosti"]} />
            <Big w={78} off caret icon={UpArrow} lines={["Prikaži manj", "podrobnosti"]} />
            <Expand>
              <SmallButton type="button" $off><OutlineIcon plus />Razširi polje</SmallButton>
              <SmallButton type="button" $off><OutlineIcon />Strni polje</SmallButton>
            </Expand>
          </GroupBody>
          <GroupLabel>Aktivno polje</GroupLabel>
        </Group>
        <Divider />
        <Group $w={202}>
          <GroupBody $pad={3}>
            <Big w={83} icon={Slicer} lines={["Vstavi", "razčlenjevalnik"]} />
            <Big w={58} icon={Timeline} lines={["Vstavi", "časovnico"]} />
            <Big w={54} off icon={Connections} lines={["Povezave", "filtra"]} />
          </GroupBody>
          <GroupLabel>Filtriraj</GroupLabel>
        </Group>
        <Divider />
        <Group $w={121}>
          <GroupBody $pad={5}>
            <Big w={40} caret icon={Refresh} lines={["Osveži", ""]} />
            <Big w={72} caret icon={Source} lines={["Spremeni vir", "podatkov"]} />
          </GroupBody>
          <GroupLabel>Podatki</GroupLabel>
        </Group>
        <Divider />
        <Group $w={105}>
          <GroupBody $pad={5}>
            <Big w={40} caret icon={Clear} lines={["Počisti", ""]} />
            <Big w={56} icon={MoveChart} lines={["Premakni", "grafikon"]} />
          </GroupBody>
          <GroupLabel>Dejanja</GroupLabel>
        </Group>
        <Divider />
        <Group $w={179}>
          <GroupBody $pad={4}>
            <Big w={82} caret icon={Fields} lines={["Polja, elementi", "in nabori"]} />
            <Big w={44} off caret icon={Olap} lines={["Orodja", "OLAP"]} />
            <Big w={44} off icon={Relations} lines={["Relacije"]} />
          </GroupBody>
          <GroupLabel>Izračuni</GroupLabel>
        </Group>
        <Divider />
        <Group $w={96}>
          <GroupBody $pad={4}>
            <Big w={44} on icon={FieldListIcon} lines={["Seznam", "polj"]} />
            <Big w={44} on caret icon={FieldButtonsIcon} lines={["Gumbi", "polja"]} />
          </GroupBody>
          <GroupLabel>Pokaži/skrij</GroupLabel>
        </Group>
        <Divider />
        <Collapse type="button" aria-label="Strni trak">
          <svg width="9" height="6" viewBox="0 0 9 6" fill="none"><path d="M1 5.300L4.500 1.500L8 5.300" stroke="#666" strokeWidth="1.800" /></svg>
        </Collapse>
      </Ribbon>

      <FormulaBar>
        <NameBox>
          <NameInput aria-label="Polje z imenom" defaultValue="Grafikon 1" />
          <Caret s={8} />
        </NameBox>
        <Dots><i /><i /><i /></Dots>
        <FxBox>
          <svg width="12" height="11" viewBox="0 0 12 11"><path d="M1 .5l10 10M11 .5L1 10.500" stroke="#bdbdbd" strokeWidth="1.600" /></svg>
          <svg width="14" height="11" viewBox="0 0 14 11" fill="none"><path d="M1 6l4 4l8-9.500" stroke="#bdbdbd" strokeWidth="2" /></svg>
          <FxButton type="button">f<sub>x</sub></FxButton>
        </FxBox>
        <FormulaField>
          <FormulaText aria-label="Vnosna vrstica" />
          <FormulaUp type="button" aria-label="Strni vnosno vrstico">
            <svg width="8" height="6" viewBox="0 0 8 6" fill="none"><path d="M1 5L4 1.500L7 5" stroke="#b5b5b5" strokeWidth="1.600" /></svg>
          </FormulaUp>
        </FormulaField>
      </FormulaBar>

      <Work>
        <Left>
          <SheetRow>
            <GridArea>
              <Grid>
                <colgroup>
                  <col width={26} />
                  {COLUMNS.map(([n, w]) => <col key={n} width={w} />)}
                  {EMPTY_COLUMNS.map(n => <col key={n} width={64} />)}
                  <col />
                </colgroup>
                <thead>
                  <tr>
                    <Corner><svg width="12" height="12" viewBox="0 0 12 12"><path d="M12 0v12H0z" fill="#b4b4b4" /></svg></Corner>
                    {COLUMNS.map(([n]) => <ColHead key={n}>{n}</ColHead>)}
                    {EMPTY_COLUMNS.map(n => <ColHead key={n}>{n}</ColHead>)}
                    <ColHead />
                  </tr>
                </thead>
                <tbody>
                  <tr>
                    <RowHead $bottom>4</RowHead>
                    {COLUMNS.map(([n, , t], i) => (
                      <HeadCell key={n}>
                        {i === 0 ? (
                          <HeadInner>
                            {t}
                            <SortButton type="button" aria-label="Razvrsti">
                              <svg width="13" height="11" viewBox="0 0 13 11" fill="none"><path d="M0 5h7L3.500 9z" fill="#555" /><path d="M9.500 10V1M7.500 3l2-2l2 2" stroke="#555" /></svg>
                            </SortButton>
                          </HeadInner>
                        ) : t}
                      </HeadCell>
                    ))}
                    {EMPTY_COLUMNS.map(n => <EmptyCell key={n} />)}
                    <EmptyCell />
                  </tr>
                  {ROWS.map((r, i) => (
                    <tr key={r.id}>
                      <RowHead>{i + 5}</RowHead>
                      <NameCell>Naziv partnerja {r.id}</NameCell>
                      <NumCell>{r.share}</NumCell>
                      <NumCell>{r.total}</NumCell>
                      <NumCell>{Z}</NumCell>
                      <NumCell>{r.total}</NumCell>
                      <NumCell>{Z}</NumCell>
                      <NumCell>{r.g ?? Z}</NumCell>
                      <NumCell>{Z}</NumCell>
                      {[0, 1, 2, 3].map(k => <NumCell key={k} $edge={k === 3}>{r.late?.[k]}</NumCell>)}
                      {EMPTY_COLUMNS.map(n => <EmptyCell key={n} />)}
                      <EmptyCell />
                    </tr>
                  ))}
                  <tr>
                    <RowHead />
                    {COLUMNS.map(([n]) => <NumCell key={n} $edge={n === "L"} />)}
                    {EMPTY_COLUMNS.map(n => <EmptyCell key={n} />)}
                    <EmptyCell />
                  </tr>
                </tbody>
              </Grid>

              <Chart>
                <FilterRow>
                  <ChartFilter type="button" $w={126}><span>Terjatve/Obveznosti</span><Caret c="#444" /><FunnelIcon c="#6b6b6b" /></ChartFilter>
                  <ChartFilter type="button" $w={103} $focus><span>Denarna enota</span><Caret c="#444" /><FunnelIcon c="#6b6b6b" /></ChartFilter>
                </FilterRow>
                <ValueRow>
                  {VALUE_CHIPS.map(([t, w], i) => <ValueChip key={i} type="button" $w={w}>{t}</ValueChip>)}
                </ValueRow>
                <ChartTitle>Delež zapadlo</ChartTitle>
                <ChartBody>
                  <Pie />
                  <Legend>
                    <LegendButton type="button">Partner<Caret c="#444" /></LegendButton>
                    <LegendList>
                      {ROWS.slice(0, 8).map((r, i) => (
                        <LegendItem key={r.id}><Swatch $c={PALETTE[i]} />Naziv partnerja {r.id}</LegendItem>
                      ))}
                    </LegendList>
                  </Legend>
                </ChartBody>
                <ValuesButton type="button">Vrednosti</ValuesButton>
                {[[0, 0], [50, 0], [100, 0], [0, 50], [100, 50], [0, 100], [50, 100], [100, 100]].map(([x, y]) => <Handle key={`${x}-${y}`} $x={x} $y={y} />)}
              </Chart>
              <ChartTool type="button" $top={293} aria-label="Elementi grafikona">
                <svg width="14" height="14" viewBox="0 0 14 14"><path d="M5 0h4v5h5v4H9v5H5V9H0V5h5z" fill="#4a9a7c" /></svg>
              </ChartTool>
              <ChartTool type="button" $top={331} aria-label="Slogi grafikona">
                <svg width="18" height="18" viewBox="0 0 18 18"><path d="M17.500 0q-5 3-8 8l2.500 2q5-4 5.500-10z" fill="#b5b5b5" /><path d="M9 8.500q-4-1-4.500 3Q4 15 0 16.500q6 2 9.500-.5 3-2.500 2-5.500z" fill="#3f7ab6" /><circle cx="8.500" cy="11.500" r="1.800" fill="#fff" /></svg>
              </ChartTool>
            </GridArea>
            <VBar>
              <ScrollButton type="button" aria-label="Gor"><Caret up /></ScrollButton>
              <VGap $n={25} />
              <VThumb $n={312} />
              <VGap $n={398} />
              <ScrollButton type="button" aria-label="Dol"><Caret /></ScrollButton>
            </VBar>
          </SheetRow>
          <SheetTabs>
            <SheetNav><Side left c="#bdbdbd" /><Side c="#bdbdbd" /></SheetNav>
            <SheetTab type="button" $w={131}>Struktura terjatev</SheetTab>
            <SheetTab type="button" $w={124}>Zapadle terjatve</SheetTab>
            <SheetTab type="button" $w={152}>Struktura obveznosti</SheetTab>
            <SheetTab type="button" $w={144} $active>Zapadle obveznosti</SheetTab>
            <SheetTab type="button" $w={74}>Terjatve</SheetTab>
            <SheetTab type="button" $w={92}>Obveznosti</SheetTab>
            <AddSheet type="button" aria-label="Nov list">
              <svg width="16" height="16" viewBox="0 0 16 16" fill="none" stroke="#777"><circle cx="8" cy="8" r="7.200" /><path d="M8 4v8M4 8h8" strokeWidth="1.800" /></svg>
            </AddSheet>
            <HBar>
              <HDots><i /><i /><i /></HDots>
              <HTrack>
                <ScrollButton type="button" aria-label="Levo"><Side left /></ScrollButton>
                <HThumb />
                <ScrollButton type="button" aria-label="Desno"><Side /></ScrollButton>
              </HTrack>
            </HBar>
          </SheetTabs>
        </Left>

        <Pane>
          <PaneHead>
            <PaneTitle>Polja vrtilnega grafi...</PaneTitle>
            <PaneTools>
              <Caret s={9} />
              <svg width="10" height="10" viewBox="0 0 10 10"><path d="M.7 .7l8.600 8.600M9.300 .7L.7 9.300" stroke="#666" strokeWidth="1.800" /></svg>
            </PaneTools>
          </PaneHead>
          <PaneIntro>
            <span>Izberite polja, ki jih želite dodati<br />poročilu:</span>
            <GearButton type="button" aria-label="Orodja">
              <svg width="13" height="13" viewBox="0 0 13 13" fill="none" stroke="#979797"><circle cx="6.500" cy="6.500" r="3.500" strokeWidth="2.400" /><path d="M6.500 0v2.500M6.500 10.500V13M.9 3.200l2.200 1.300M9.900 8.500l2.200 1.300M.9 9.800l2.200-1.300M9.900 4.500l2.200-1.300" strokeWidth="2.600" /></svg>
              <Caret />
            </GearButton>
          </PaneIntro>
          <Search>
            <SearchInput placeholder="Išči" aria-label="Išči" />
            <svg width="13" height="13" viewBox="0 0 13 13" fill="none" stroke="#3f6fb5"><circle cx="8" cy="5" r="4" strokeWidth="1.500" /><path d="M5 8L.8 12.200" strokeWidth="2.200" /></svg>
          </Search>
          <FieldBox>
            <FieldList>
              {FIELDS.map(([t, on, f]) => (
                <FieldItem key={t} $b={on}>
                  <CheckLabel><Check type="checkbox" defaultChecked={on} />{t}</CheckLabel>
                  {f && <FunnelIcon />}
                </FieldItem>
              ))}
            </FieldList>
            <MiniBar>
              <ScrollButton type="button" aria-label="Gor"><Caret up /></ScrollButton>
              <VThumb $n={164} />
              <VGap $n={73} />
              <ScrollButton type="button" aria-label="Dol"><Caret /></ScrollButton>
            </MiniBar>
          </FieldBox>
          <Drag>Povlecite polja med spodnjimi območji:</Drag>
          <Areas>
            <Area>
              <AreaHead><IconSlot><FunnelIcon /></IconSlot>Filtri</AreaHead>
              <DropZone><Chips><Chip type="button" $pad={9}>Terjatve/Obvez...<Caret /></Chip><Chip type="button" $pad={9}>Denarna enota<Caret /></Chip></Chips></DropZone>
            </Area>
            <Area $right>
              <AreaHead><IconSlot><Bars v /></IconSlot>Legenda (niz)</AreaHead>
              <DropZone><Chips><Chip type="button" $pad={9}><IconSlot>Σ</IconSlot>Vrednosti<Caret /></Chip></Chips></DropZone>
            </Area>
            <Area $bottom>
              <AreaHead><IconSlot><Bars /></IconSlot>Os (kategorije)</AreaHead>
              <DropZone><Chips><Chip type="button" $pad={9}>Partner<Caret /></Chip></Chips></DropZone>
            </Area>
            <Area $right $bottom>
              <AreaHead><IconSlot>Σ</IconSlot>Vrednosti</AreaHead>
              <DropZone>
                <Chips>
                  {VALUES.map((t, i) => <Chip key={i} type="button" $pad={8}>{t}<Caret /></Chip>)}
                </Chips>
                <MiniBar>
                  <ScrollButton type="button" aria-label="Gor"><Caret up /></ScrollButton>
                  <VThumb $n={44} />
                  <VGap $n={43} />
                  <ScrollButton type="button" aria-label="Dol"><Caret /></ScrollButton>
                </MiniBar>
              </DropZone>
            </Area>
          </Areas>
          <PaneFoot>
            <CheckLabel><Check type="checkbox" />Odloži posodobitev postavitve</CheckLabel>
            <UpdateButton type="button">Posodobi</UpdateButton>
          </PaneFoot>
        </Pane>
      </Work>
    </Shell>
  );
}
